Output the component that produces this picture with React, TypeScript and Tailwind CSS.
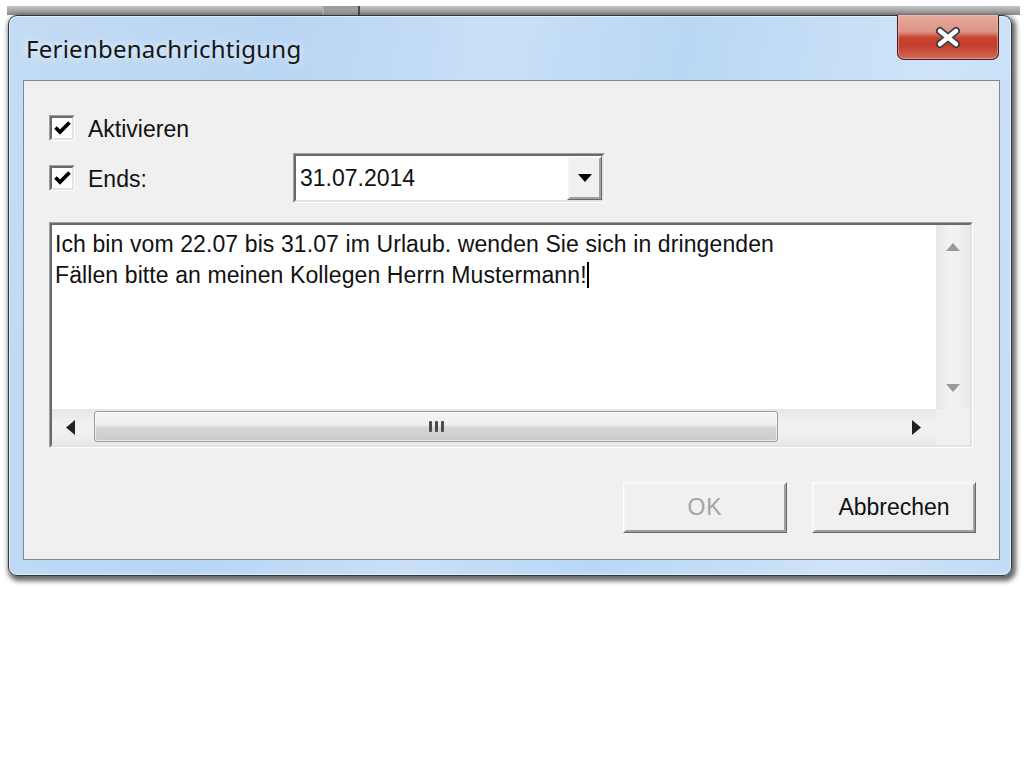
import React from "react";

const SANS = "font-['Liberation_Sans',Arial,sans-serif]";

function Sunken({ className = "", children }: { className?: string; children?: React.ReactNode }) {
  return (
    <div className={`border border-t-[#a0a0a0] border-l-[#a0a0a0] border-b-white border-r-white ${className}`}>
      <div className="w-full h-full border-2 border-t-[#696969] border-l-[#696969] border-b-[#e3e3e3] border-r-[#e3e3e3] bg-white">
        {children}
      </div>
    </div>
  );
}

function Raised({ className = "", children }: { className?: string; children?: React.ReactNode }) {
  return (
    <div className={`border border-t-white border-l-white border-b-[#696969] border-r-[#696969] ${className}`}>
      <div className="w-full h-full border-2 border-t-[#f4f4f4] border-l-[#f4f4f4] border-b-[#a0a0a0] border-r-[#a0a0a0] bg-[#f0f0f0] flex items-center justify-center">
        {children}
      </div>
    </div>
  );
}

function CheckBox() {
  return (
    <Sunken className="w-[26px] h-[26px] shrink-0">
      <div className="w-full h-full flex items-center justify-center">
        <svg width="17" height="14" viewBox="0 0 17 14">
          <path d="M1.5 6.5 L6 11 L15.5 1.5" stroke="#000" strokeWidth="3.8" fill="none" />
        </svg>
      </div>
    </Sunken>
  );
}

export default function App() {
  return (
    <div className="w-[1024px] h-[768px] bg-white pl-[7px] pt-[6px]">
      <div className="w-[1013px] flex flex-col">
        {/* background strip behind window */}
        <div className="h-[9px] flex bg-[linear-gradient(#c4c4c4,#8a8a8a)]">
          <div className="w-[315px]" />
          <div className="w-[2px] bg-[#b0b0b0]" />
          <div className="w-[34px] bg-[#9c9c9c]" />
          <div className="w-[2px] bg-[#4a4a4a]" />
        </div>
        {/* window */}
        <div className="ml-[1px] w-[1004px] h-[561px] rounded-[9px] border border-[#2e3946] flex flex-col bg-[linear-gradient(100deg,#c3dcf5_0%,#b8d5f3_25%,#c9e0f7_45%,#b9d7f4_62%,#cfe4f8_85%,#c2dcf5_100%)] shadow-[inset_0_0_0_1px_rgba(255,255,255,0.55),2px_3px_5px_2px_rgba(0,0,0,0.6)]">
          {/* title bar */}
          <div className="h-[64px] flex justify-between pl-[17px] pr-[12px]">
            <div className="pt-[18px] font-['Noto_Sans','Open_Sans',sans-serif] text-[24px] tracking-[0.25px] leading-[30px] text-[#161616] [text-shadow:0_0_8px_rgba(255,255,255,0.9)]">
              Ferienbenachrichtigung
            </div>
            <div className="-mt-[1px] w-[102px] h-[45px] rounded-b-[7px] border border-t-0 border-[#4a1d16] bg-[linear-gradient(#e8ab9f_0%,#dc9484_38%,#c8432e_52%,#c33f2b_70%,#d46a58_100%)] shadow-[inset_0_0_0_1px_rgba(255,200,190,0.45)] flex items-center justify-center">
              <svg width="28" height="23" viewBox="0 0 28 23">
                <path d="M6 5 L22 18 M22 5 L6 18" stroke="#3b3f45" strokeWidth="8" strokeLinecap="round" />
                <path d="M6 5 L22 18 M22 5 L6 18" stroke="#ffffff" strokeWidth="4.5" strokeLinecap="round" />
              </svg>
            </div>
          </div>
          {/* client area */}
          <div className={`ml-[14px] w-[977px] h-[480px] border border-[#7b8898] bg-[#f0f0f0] pl-[25px] pt-[34px] flex flex-col ${SANS} text-[23px] text-[#111]`}>
            <div className="h-[26px] flex items-center gap-[13px]">
              <CheckBox />
              <span className="leading-[26px] pt-[2px]">Aktivieren</span>
            </div>
            <div className="mt-[12px] h-[50px] flex items-center">
              <div className="w-[244px] flex items-center gap-[13px]">
                <CheckBox />
                <span className="leading-[26px] pt-[2px]">Ends:</span>
              </div>
              <Sunken className="w-[312px] h-[50px]">
                <div className="w-full h-full flex items-center">
                  <span className="flex-1 pl-[4px] leading-[26px]">31.07.2014</span>
                  <Raised className="w-[35px] h-full">
                    <svg width="14" height="8" viewBox="0 0 14 8">
                      <path d="M0 0 L14 0 L7 8 Z" fill="#000" />
                    </svg>
                  </Raised>
                </div>
              </Sunken>
            </div>
            {/* text area */}
            <Sunken className="mt-[19px] w-[924px] h-[226px]">
              <div className="w-full h-full flex flex-col">
                <div className="h-[184px] flex">
                  <div className="flex-1 pl-[3px] pt-[4px] leading-[31px] tracking-[0.1px] whitespace-nowrap">
                    <div>Ich bin vom 22.07 bis 31.07 im Urlaub. wenden Sie sich in dringenden</div>
                    <div>
                      Fällen bitte an meinen Kollegen Herrn Mustermann!
                      <span className="inline-block w-[2px] h-[26px] bg-black align-[-5px]" />
                    </div>
                  </div>
                  <div className="w-[34px] flex flex-col justify-between bg-[linear-gradient(to_right,#e6e6e6,#f2f2f2_40%,#f2f2f2_60%,#e8e8e8)]">
                    <div className="h-[44px] flex items-center justify-center">
                      <svg width="14" height="8" viewBox="0 0 14 8">
                        <path d="M7 0 L14 8 L0 8 Z" fill="#9a9a9a" />
                      </svg>
                    </div>
                    <div className="h-[42px] flex items-center justify-center">
                      <svg width="14" height="8" viewBox="0 0 14 8">
                        <path d="M0 0 L14 0 L7 8 Z" fill="#9a9a9a" />
                      </svg>
                    </div>
                  </div>
                </div>
                <div className="flex-1 flex">
                  <div className="flex-1 flex bg-[linear-gradient(#e6e6e6,#f1f1f1_40%,#f1f1f1_60%,#e9e9e9)]">
                    <div className="w-[36px] flex items-center justify-center">
                      <svg width="9" height="15" viewBox="0 0 9 15">
                        <path d="M9 0 L9 15 L0 7.5 Z" fill="#222" />
                      </svg>
                    </div>
                    <div className="ml-[6px] mt-[2px] w-[684px] h-[31px] rounded-[3px] border border-[#9b9b9b] bg-[linear-gradient(#f6f6f6_0%,#ececec_45%,#d6d6d6_55%,#c9c9c9_100%)] shadow-[inset_0_0_0_1px_rgba(255,255,255,0.6)] flex items-center justify-center gap-[3px]">
                      <div className="w-[3px] h-[11px] bg-[#4c4c4c] rounded-[1px]" />
                      <div className="w-[3px] h-[11px] bg-[#4c4c4c] rounded-[1px]" />
                      <div className="w-[3px] h-[11px] bg-[#4c4c4c] rounded-[1px]" />
                    </div>
                    <div className="flex-1" />
                    <div className="w-[40px] flex items-center justify-center">
                      <svg width="9" height="15" viewBox="0 0 9 15">
                        <path d="M0 0 L0 15 L9 7.5 Z" fill="#222" />
                      </svg>
                    </div>
                  </div>
                  <div className="w-[34px] bg-[#f0f0f0]" />
                </div>
              </div>
            </Sunken>
            {/* buttons */}
            <div className="mt-[34px] flex justify-end gap-[25px] pr-[23px]">
              <Raised className="w-[164px] h-[51px]">
                <span className="text-[#a3a3a3] tracking-[1px]">OK</span>
              </Raised>
              <Raised className="w-[164px] h-[51px]">
                <span>Abbrechen</span>
              </Raised>
            </div>
          </div>
        </div>
      </div>
    </div>
  );
}
